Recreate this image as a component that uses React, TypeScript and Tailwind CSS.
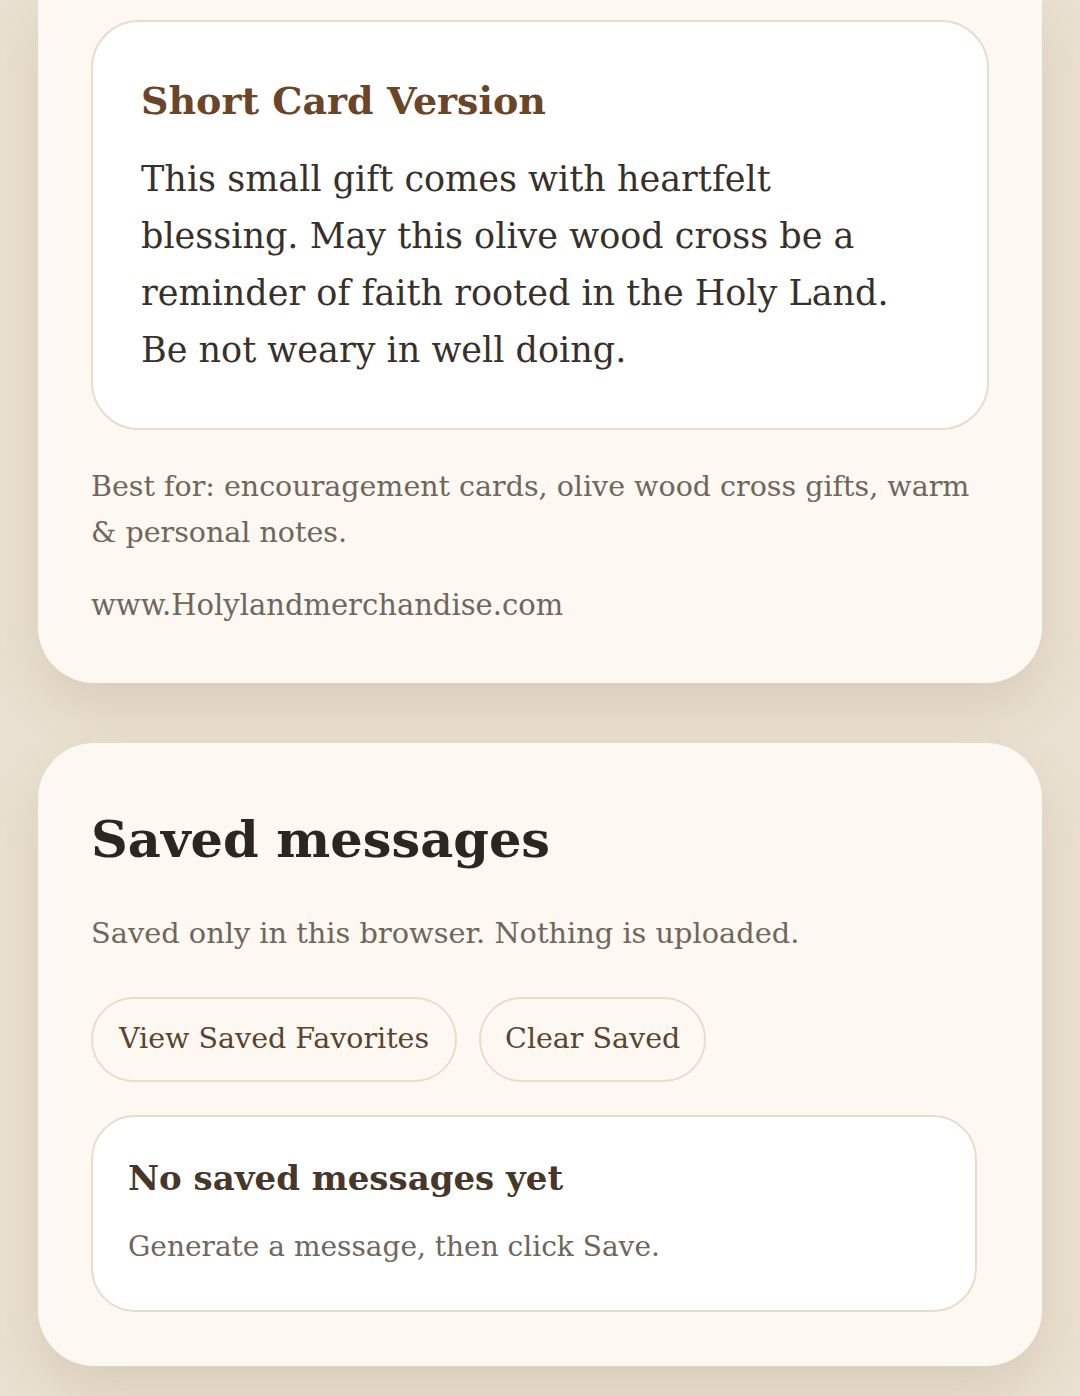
import React from 'react';

const serif = { fontFamily: '"DejaVu Serif", "Liberation Serif", serif' };

const ShortCard: React.FC = () => {
    return (
        <section className="mx-[38px] rounded-b-[56px] bg-[#fdf9f2] px-[53px] pt-[20px] pb-[55px] shadow-[0_24px_50px_rgba(120,90,50,0.14)]">
            <div className="rounded-[48px] border-2 border-[#e6ddcd] bg-white px-[48px] pt-[47px] pb-[49px]">
                <h3 className="text-[38px] leading-[63px] font-bold text-[#6b4528]">Short Card Version</h3>
                <p className="mt-[19px] max-w-[772px] text-[35px] leading-[57px] text-[#38312b]">
                    This small gift comes with heartfelt blessing. May this olive wood cross be a reminder of faith
                    rooted in the Holy Land. Be not weary in well doing.
                </p>
            </div>
            <p className="mt-[34px] text-[28.5px] leading-[46px] text-[#70665b]">
                Best for: encouragement cards, olive wood cross gifts, warm &amp; personal notes.
            </p>
            <p className="mt-[26px] text-[29px] leading-[46px] text-[#70665b]">www.Holylandmerchandise.com</p>
        </section>
    );
};

const SavedMessages: React.FC = () => {
    return (
        <section className="mx-[38px] mt-[60px] rounded-[56px] bg-[#fdf9f2] px-[53px] pt-[60px] pb-[54px] shadow-[0_24px_50px_rgba(120,90,50,0.14)]">
            <h2 className="text-[51px] leading-[72px] font-bold text-[#2c2620]">Saved messages</h2>
            <p className="mt-[35px] text-[28.8px] leading-[46px] text-[#70665b]">
                Saved only in this browser. Nothing is uploaded.
            </p>
            <div className="mt-[41px] flex gap-[22px]">
                <button className="h-[85px] rounded-full border-2 border-[#e6ddcd] bg-[#fdf9f2] px-[26px] text-[28.5px] text-[#5a4430]">
                    View Saved Favorites
                </button>
                <button className="h-[85px] rounded-full border-2 border-[#e6ddcd] bg-[#fdf9f2] px-[24px] text-[28.5px] text-[#5a4430]">
                    Clear Saved
                </button>
            </div>
            <div className="mt-[33px] mr-[12px] rounded-[44px] border-2 border-[#e6ddcd] bg-white px-[35px] pt-[36px] pb-[40px]">
                <h3 className="text-[34px] leading-[50px] font-bold text-[#47372a]">No saved messages yet</h3>
                <p className="mt-[21px] text-[28px] leading-[46px] text-[#70665b]">Generate a message, then click Save.</p>
            </div>
        </section>
    );
};

export default function App() {
    return (
        <div className="min-h-[1396px] overflow-hidden bg-[#eae0d1]" style={serif}>
            <ShortCard />
            <SavedMessages />
        </div>
    );
}
